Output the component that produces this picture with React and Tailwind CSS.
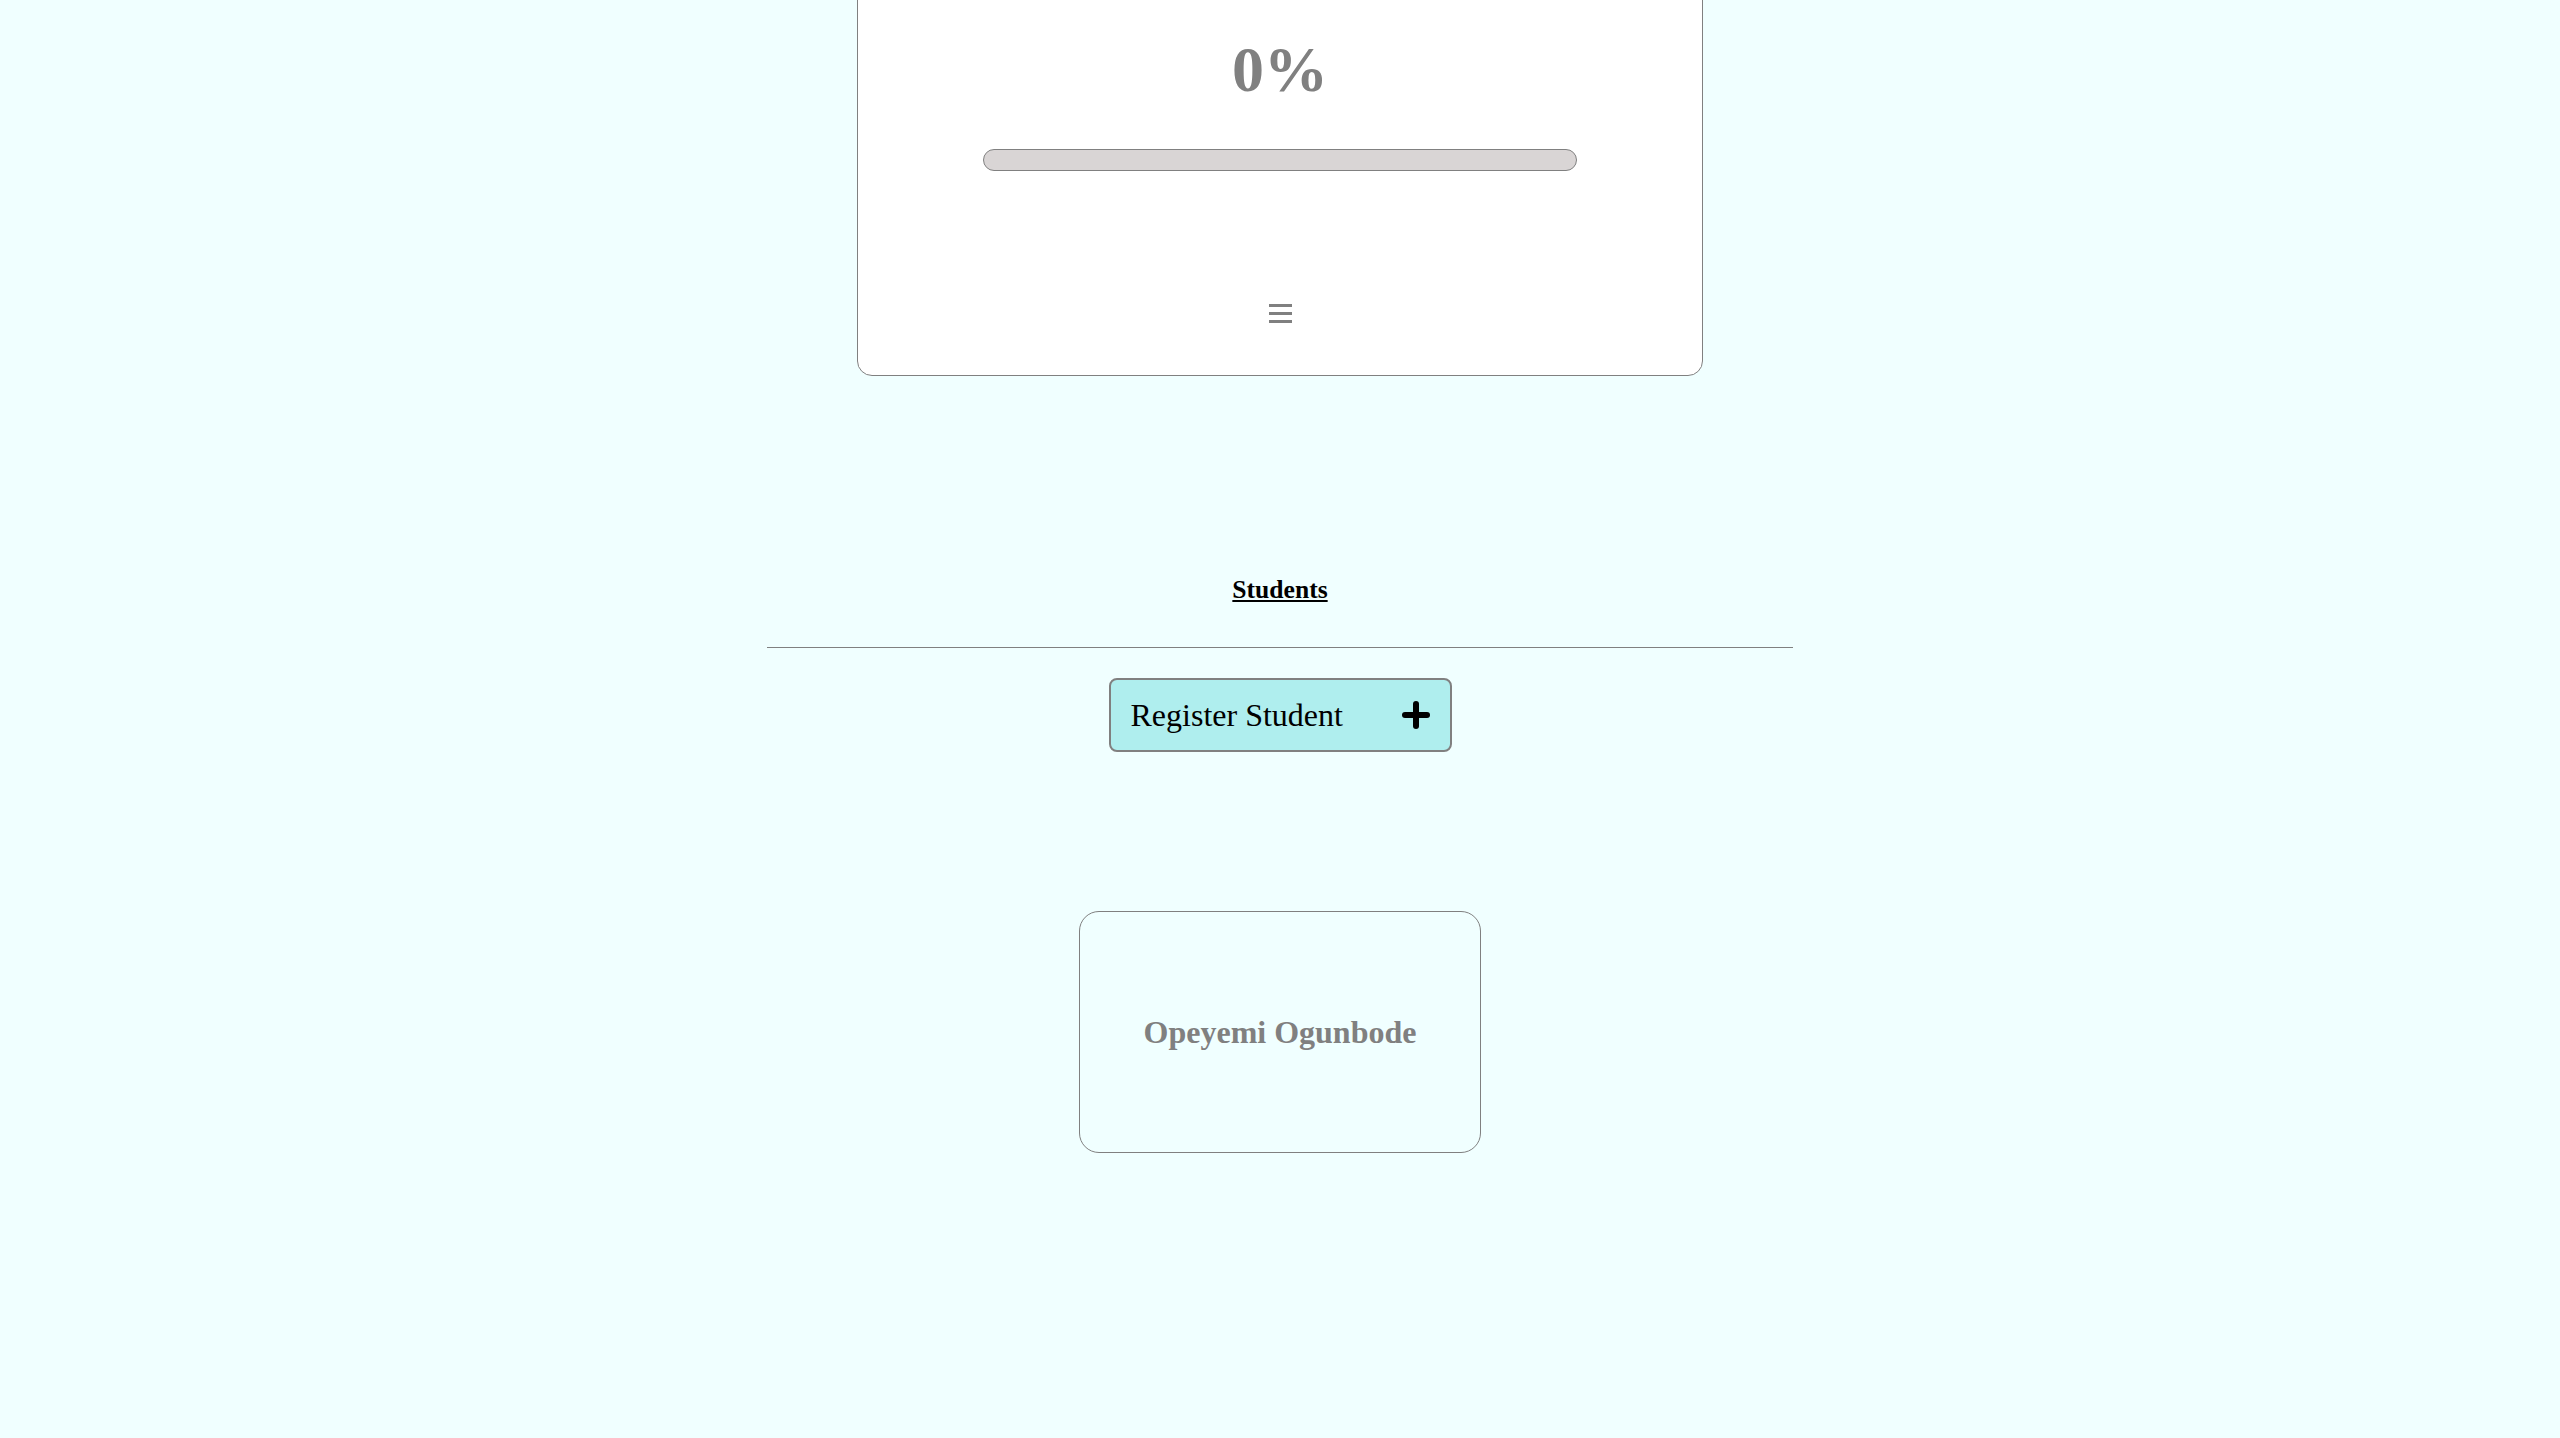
const PlusIcon = () => (
  <svg width="28" height="28" viewBox="0 0 28 28" className="shrink-0">
    <line x1="14" y1="3" x2="14" y2="25" stroke="black" strokeWidth="6" strokeLinecap="round" />
    <line x1="3" y1="14" x2="25" y2="14" stroke="black" strokeWidth="6" strokeLinecap="round" />
  </svg>
);

const MenuIcon = () => (
  <div className="flex flex-col gap-[5px]">
    <div className="w-[23px] h-[3px] bg-[#808080]" />
    <div className="w-[23px] h-[3px] bg-[#808080]" />
    <div className="w-[23px] h-[3px] bg-[#808080]" />
  </div>
);

const ProgressCard = ({ percent }) => (
  <div className="w-[846px] -mt-[60px] bg-white border border-[#808080] rounded-[15px] flex flex-col items-center pt-[96px] pb-[52px]">
    <div className="h-[66px] text-[64px] leading-[66px] font-bold text-[#808080]">
      {percent}%
    </div>
    <div className="mt-[46px] w-[594px] h-[22px] rounded-full border border-[#808080] bg-[#d9d5d5] overflow-hidden">
      <div className="h-full bg-[#808080]" style={{ width: `${percent}%` }} />
    </div>
    <div className="mt-[133px]">
      <MenuIcon />
    </div>
  </div>
);

const StudentCard = ({ name }) => (
  <div className="w-[402px] h-[242px] border border-[#808080] rounded-[20px] flex items-center justify-center">
    <span className="text-[32px] font-bold text-[#808080]">{name}</span>
  </div>
);

export default function App() {
  const students = ["Opeyemi Ogunbode"];

  return (
    <div
      className="min-h-screen bg-[#f0ffff] flex flex-col items-center overflow-hidden"
      style={{ fontFamily: '"Liberation Serif", "Times New Roman", serif' }}
    >
      <ProgressCard percent={0} />

      {/* Students section */}
      <h2 className="mt-[199px] text-[25.6px] leading-[30px] font-bold underline text-black">
        Students
      </h2>
      <hr className="mt-[42px] w-[1026px] border-0 border-t border-[#808080]" />

      <button className="mt-[30px] w-[343px] h-[74px] bg-[#afeeee] border-2 border-[#808080] rounded-[8px] flex items-center justify-between pl-[20px] pr-[20px]">
        <span className="text-[32px] text-black">Register Student</span>
        <PlusIcon />
      </button>

      <div className="mt-[159px] flex flex-wrap justify-center gap-6">
        {students.map((s) => (
          <StudentCard key={s} name={s} />
        ))}
      </div>
    </div>
  );
}
